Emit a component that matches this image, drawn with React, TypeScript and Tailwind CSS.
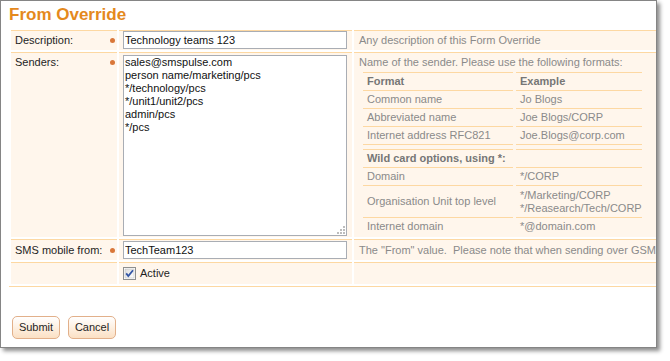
import React from "react";

const cellBase = "bg-[#fff6ec] border-t border-[#fdd8a2]";

function Bullet() {
  return <span className="block w-[5px] h-[5px] rounded-full bg-[#d9773a]" />;
}

function Label({ text, bullet = true }: { text: string; bullet?: boolean }) {
  return (
    <div className={`${cellBase} w-[106px] shrink-0 flex justify-between pl-[4px] pr-[2px] pt-[3px]`}>
      <span className="leading-[13px] text-[#1e1e1e]">{text}</span>
      {bullet && (
        <span className="h-[13px] flex items-center">
          <Bullet />
        </span>
      )}
    </div>
  );
}

function NRow({
  a,
  b,
  h = "h-[18px]",
  bold = false,
}: {
  a?: React.ReactNode;
  b?: React.ReactNode;
  h?: string;
  bold?: boolean;
}) {
  return (
    <div className={`flex gap-[3px] ${h}`}>
      <div
        className={`w-[150px] border-t border-[#fdd8a2] flex items-center pl-[4px] leading-[13px] whitespace-nowrap ${
          bold ? "font-bold text-[#767676]" : ""
        }`}
      >
        {a}
      </div>
      <div
        className={`w-[126px] border-t border-[#fdd8a2] flex items-center pl-[4px] leading-[13px] whitespace-nowrap ${
          bold ? "font-bold text-[#767676]" : ""
        }`}
      >
        {b}
      </div>
    </div>
  );
}

export default function App() {
  return (
    <div className="w-[670px] h-[361px] bg-white font-['Liberation_Sans',Arial,sans-serif] text-[11px]">
      <div className="w-[657px] h-[348px] border border-[#858585] bg-white overflow-hidden shadow-[3px_3px_4px_rgba(0,0,0,0.45)] flex flex-col">
        {/* Title */}
        <div className="h-[27px] pl-[8px] pt-[4px] shrink-0">
          <span className="text-[17px] leading-[20px] font-bold text-[#e4891d]">From Override</span>
        </div>

        {/* Rows */}
        <div className="mt-[2px] ml-[10px] flex flex-col gap-[2px] w-[700px]">
          {/* Row 1 */}
          <div className="flex gap-[2px] h-[20px]">
            <Label text="Description:" />
            <div className={`${cellBase} w-[233px] shrink-0 pl-[4px]`}>
              <input
                readOnly
                value="Technology teams 123"
                className="block w-[224px] h-[18px] border border-[#a9adb4] bg-white px-[1px] text-[11px] text-[#111] outline-none font-['Liberation_Sans',Arial,sans-serif]"
              />
            </div>
            <div className={`${cellBase} flex-1 pl-[5px] pt-[3px] leading-[13px] text-[#8a8a8a] whitespace-nowrap`}>
              Any description of this Form Override
            </div>
          </div>

          {/* Row 2 */}
          <div className="flex gap-[2px] h-[185px]">
            <Label text="Senders:" />
            <div className={`${cellBase} w-[233px] shrink-0 pl-[4px] pt-[2px]`}>
              <div className="relative w-[224px] h-[181px]">
                <textarea
                  readOnly
                  value={
                    "sales@smspulse.com\nperson name/marketing/pcs\n*/technology/pcs\n*/unit1/unit2/pcs\nadmin/pcs\n*/pcs"
                  }
                  className="block w-[224px] h-[181px] border border-[#a9adb4] bg-white px-[1px] py-0 text-[11px] leading-[13px] text-[#111] resize-none outline-none font-['Liberation_Sans',Arial,sans-serif]"
                />
                <svg className="absolute right-[2px] bottom-[2px]" width="8" height="8" viewBox="0 0 8 8">
                  <rect x="6" y="0" width="2" height="2" fill="#bdbdbd" />
                  <rect x="3" y="3" width="2" height="2" fill="#bdbdbd" />
                  <rect x="6" y="3" width="2" height="2" fill="#bdbdbd" />
                  <rect x="0" y="6" width="2" height="2" fill="#bdbdbd" />
                  <rect x="3" y="6" width="2" height="2" fill="#bdbdbd" />
                  <rect x="6" y="6" width="2" height="2" fill="#bdbdbd" />
                </svg>
              </div>
            </div>
            <div className={`${cellBase} flex-1 text-[#8a8a8a]`}>
              <div className="pl-[5px] h-[19px] leading-[19px] whitespace-nowrap">
                Name of the sender. Please use the following formats:
              </div>
              <div className="ml-[9px] flex flex-col">
                <NRow a="Format" b="Example" bold />
                <NRow a="Common name" b="Jo Blogs" />
                <NRow a="Abbreviated name" b="Joe Blogs/CORP" />
                <NRow a="Internet address RFC821" b="Joe.Blogs@corp.com" />
                <NRow h="h-[5px]" />
                <NRow a="Wild card options, using *:" b="" bold />
                <NRow a="Domain" b="*/CORP" />
                <NRow
                  a="Organisation Unit top level"
                  b={
                    <span>
                      */Marketing/CORP
                      <br />
                      */Reasearch/Tech/CORP
                    </span>
                  }
                  h="h-[32px]"
                />
                <NRow a="Internet domain" b="*@domain.com" />
              </div>
            </div>
          </div>

          {/* Row 3 */}
          <div className="flex gap-[2px] h-[21px]">
            <div className={`${cellBase} w-[106px] shrink-0 flex justify-between items-center pl-[4px] pr-[2px]`}>
              <span className="leading-[13px] text-[#1e1e1e]">SMS mobile from:</span>
              <Bullet />
            </div>
            <div className={`${cellBase} w-[233px] shrink-0 pl-[4px] pt-[1px]`}>
              <input
                readOnly
                value="TechTeam123"
                className="block w-[224px] h-[18px] border border-[#a9adb4] bg-white px-[1px] text-[11px] text-[#111] outline-none font-['Liberation_Sans',Arial,sans-serif]"
              />
            </div>
            <div className={`${cellBase} flex-1 pl-[5px] flex items-center leading-[13px] text-[#8a8a8a] whitespace-pre`}>
              {'The "From" value.  Please note that when sending over GSM the value is limited to 11 characters.'}
            </div>
          </div>

          {/* Row 4 */}
          <div className="flex gap-[2px] h-[22px]">
            <div className={`${cellBase} w-[106px] shrink-0`} />
            <div className={`${cellBase} w-[233px] shrink-0 pl-[4px] flex items-center gap-[4px]`}>
              <svg width="13" height="13" viewBox="0 0 13 13">
                <defs>
                  <linearGradient id="cbg" x1="0" y1="0" x2="1" y2="1">
                    <stop offset="0" stopColor="#dcdcdc" />
                    <stop offset="1" stopColor="#ffffff" />
                  </linearGradient>
                </defs>
                <rect x="0.5" y="0.5" width="12" height="12" fill="#fff" stroke="#8e8f8f" />
                <rect x="2" y="2" width="9" height="9" fill="url(#cbg)" stroke="#b7b7b7" strokeWidth="0.5" />
                <path d="M3.2 6.4 L5.3 9 L10 3.3" fill="none" stroke="#3355a4" strokeWidth="1.8" />
              </svg>
              <span className="leading-[13px] text-[#1e1e1e]">Active</span>
            </div>
            <div className={`${cellBase} flex-1`} />
          </div>
        </div>

        {/* bottom line */}
        <div className="mt-[2px] ml-[8px] w-[700px] h-px bg-[#fdd8a2]" />

        {/* Buttons */}
        <div className="mt-[29px] ml-[11px] flex gap-[8px]">
          <button className="w-[48px] h-[23px] rounded-[5px] border border-[#e2b08a] bg-gradient-to-b from-[#ffffff] to-[#fbe0c4] text-[11px] text-[#1e1e1e] font-['Liberation_Sans',Arial,sans-serif]">
            Submit
          </button>
          <button className="w-[48px] h-[23px] rounded-[5px] border border-[#e2b08a] bg-gradient-to-b from-[#ffffff] to-[#fbe0c4] text-[11px] text-[#1e1e1e] font-['Liberation_Sans',Arial,sans-serif]">
            Cancel
          </button>
        </div>
      </div>
    </div>
  );
}
